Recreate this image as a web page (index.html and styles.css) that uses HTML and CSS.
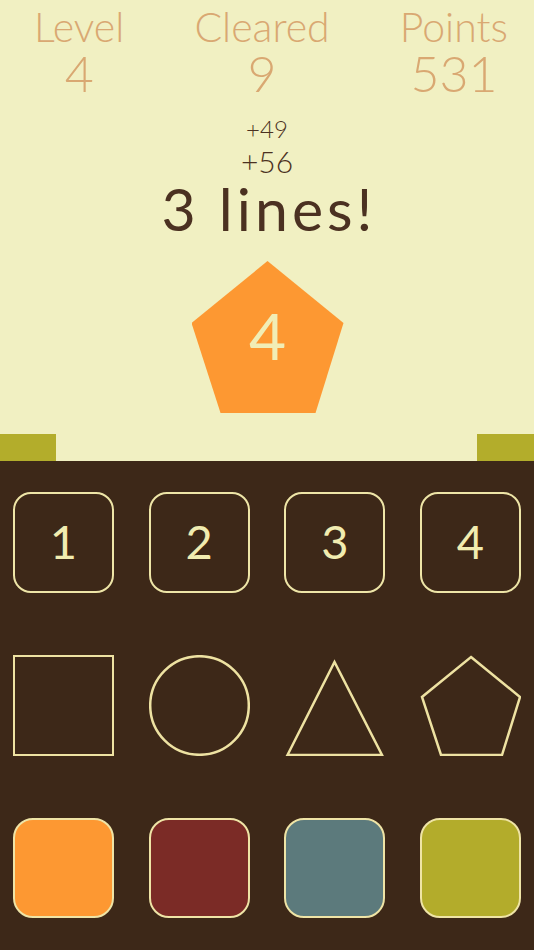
FILE: index.html
```html
<!DOCTYPE html>
<html>
<head>
<meta charset="utf-8">
<link rel="stylesheet" href="styles.css">
</head>
<body>
<div class="app">
  <div class="top">
    <header class="stats">
      <div class="stat"><div class="label">Level</div><div class="value">4</div></div>
      <div class="stat"><div class="label">Cleared</div><div class="value">9</div></div>
      <div class="stat"><div class="label">Points</div><div class="value">531</div></div>
    </header>
    <div class="score">
      <div class="b1">+49</div>
      <div class="b2">+56</div>
      <div class="msg">3 lines!</div>
    </div>
    <div class="piece-wrap">
      <div class="piece">4</div>
    </div>
    <div class="bars">
      <div class="bar bar-left"></div>
      <div class="bar bar-right"></div>
    </div>
  </div>
  <div class="board">
    <div class="cell num">1</div>
    <div class="cell num">2</div>
    <div class="cell num">3</div>
    <div class="cell num">4</div>

    <div class="cell square"></div>
    <div class="cell shape">
      <svg viewBox="0 0 101 101" width="101" height="101"><circle cx="50.5" cy="50.5" r="49.3" /></svg>
    </div>
    <div class="cell shape">
      <svg viewBox="0 0 101 101" width="101" height="101"><polygon points="3.5,100 50.5,7 98,100" /></svg>
    </div>
    <div class="cell shape">
      <svg viewBox="0 0 101 101" width="101" height="101"><polygon points="51,2 100,42 82,100 21,100 2,42" /></svg>
    </div>

    <div class="cell swatch orange"></div>
    <div class="cell swatch red"></div>
    <div class="cell swatch teal"></div>
    <div class="cell swatch olive"></div>
  </div>
</div>
</body>
</html>
```
FILE: styles.css
```css
html, body {
  margin: 0;
  padding: 0;
}
body {
  width: 534px;
  height: 950px;
  overflow: hidden;
  font-family: Lato, "Open Sans", sans-serif;
  font-weight: 300;
}
.app {
  display: flex;
  flex-direction: column;
  height: 950px;
}
.top {
  height: 461px;
  background: #f1f0c2;
  display: flex;
  flex-direction: column;
}
.stats {
  display: flex;
  justify-content: space-between;
  padding: 6px 26px 0 34px;
  color: #d9a872;
}
.stat {
  display: flex;
  flex-direction: column;
  align-items: center;
}
.label {
  font-size: 41px;
  line-height: 42px;
}
.value {
  font-size: 50px;
  line-height: 50px;
}
.score {
  margin-top: 19px;
  text-align: center;
  color: #4b3121;
  font-weight: 400;
}
.b1 {
  font-size: 24px;
  line-height: 24px;
  font-weight: 300;
}
.b2 {
  font-size: 30px;
  line-height: 30px;
  margin-top: 5px;
  font-weight: 300;
}
.msg {
  font-size: 59px;
  line-height: 60px;
  margin-top: 3px;
  letter-spacing: 4px;
  padding-left: 4px;
}
.piece-wrap {
  display: flex;
  justify-content: center;
  margin-top: 22px;
  padding-left: 1px;
}
.piece {
  width: 152px;
  height: 152px;
  background: #fd9832;
  clip-path: polygon(50% 0, 100% 40.8%, 81.6% 100%, 19.1% 100%, 0 40.8%);
  color: #f1edb5;
  font-size: 64px;
  line-height: 64px;
  font-weight: 400;
  text-align: center;
  padding-top: 43px;
  box-sizing: border-box;
}
.bars {
  margin-top: auto;
  display: flex;
  justify-content: space-between;
  height: 27px;
}
.bar {
  background: #b3ad2b;
}
.bar-left { width: 56px; }
.bar-right { width: 57px; }
.board {
  flex: 1;
  background: #3d2818;
  padding: 31px 13px 0 13px;
  display: grid;
  grid-template-columns: repeat(4, 101px);
  grid-auto-rows: 101px;
  justify-content: space-between;
  row-gap: 62px;
  align-content: start;
}
.cell {
  box-sizing: border-box;
  width: 101px;
  height: 101px;
}
.num {
  border: 2px solid #eee5a7;
  border-radius: 18px;
  display: flex;
  align-items: center;
  justify-content: center;
  color: #f1ecb0;
  font-size: 47px;
  font-weight: 400;
  padding-bottom: 4px;
}
.square {
  border: 2.5px solid #eee2a2;
}
.shape svg {
  display: block;
  fill: none;
  stroke: #eee2a2;
  stroke-width: 2.5;
}
.swatch {
  border: 2px solid #efe4a6;
  border-radius: 20px;
  height: 100px;
}
.orange { background: #fd9832; }
.red { background: #7b2b26; }
.teal { background: #5c7a7c; }
.olive { background: #b3ac2b; }
```
